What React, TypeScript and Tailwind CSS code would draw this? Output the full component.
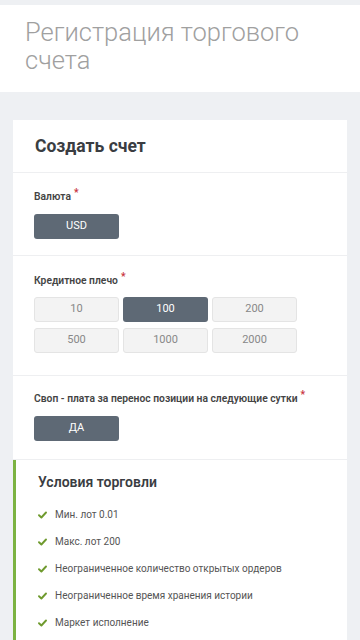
import React from "react";

const Label = ({ children }: { children: React.ReactNode }) => (
  <div className="text-[10.3px] leading-[16px] font-semibold text-[#444]">
    {children}
    <span className="text-[#c8323c] relative -top-[4px] ml-[3px]">*</span>
  </div>
);

const Btn = ({ children, active }: { children: React.ReactNode; active?: boolean }) => (
  <div
    className={
      active
        ? "w-[85px] h-[25px] rounded-[3px] bg-[#5e6975] text-white text-[11px] flex items-center justify-center"
        : "w-[85px] h-[25px] rounded-[3px] bg-[#f3f3f3] border border-[#e4e4e4] text-[#888] text-[11px] flex items-center justify-center"
    }
  >
    {children}
  </div>
);

const Check = () => (
  <svg width="9" height="8" viewBox="0 0 9 8" className="shrink-0">
    <path d="M1 4.2 L3.4 6.5 L8 1.5" fill="none" stroke="#6f9a2e" strokeWidth="1.9" strokeLinecap="round" strokeLinejoin="round" />
  </svg>
);

export default function App() {
  const items = [
    "Мин. лот 0.01",
    "Макс. лот 200",
    "Неограниченное количество открытых ордеров",
    "Неограниченное время хранения истории",
    "Маркет исполнение",
  ];
  return (
    <div className="min-h-[640px] bg-[#eef0f3] pt-[5px]" style={{ fontFamily: "Roboto, 'Noto Sans', sans-serif" }}>
      <div className="bg-white h-[87px] pl-[25px] pt-[13px]">
        <div className="text-[25.5px] leading-[28px] font-light text-[#a0a0a0]">Регистрация торгового счета</div>
      </div>
      <div className="px-[13px] pt-[28px]">
        <div className="bg-white">
          <div className="h-[53px] pl-[22px] pt-[14px] border-b border-[#eeeff1]">
            <div className="text-[17.5px] leading-[24px] font-bold text-[#3a3d42]">Создать счет</div>
          </div>
          <div className="h-[83px] pl-[21px] pt-[16px] border-b border-[#eeeff1]">
            <Label>Валюта</Label>
            <div className="mt-[9px]">
              <Btn active>USD</Btn>
            </div>
          </div>
          <div className="h-[120px] pl-[21px] pt-[17px] border-b border-[#eeeff1]">
            <Label>Кредитное плечо</Label>
            <div className="mt-[8px] grid grid-cols-[85px_85px_85px] gap-x-[4px] gap-y-[6px]">
              <Btn>10</Btn>
              <Btn active>100</Btn>
              <Btn>200</Btn>
              <Btn>500</Btn>
              <Btn>1000</Btn>
              <Btn>2000</Btn>
            </div>
          </div>
          <div className="h-[84px] pl-[21px] pt-[15px] border-b border-[#eeeff1]">
            <Label>Своп - плата за перенос позиции на следующие сутки</Label>
            <div className="mt-[9px]">
              <Btn active>ДА</Btn>
            </div>
          </div>
          <div className="border-l-[3px] border-[#7cb342] pl-[22px] pt-[12px] pb-[10px]">
            <div className="text-[14px] leading-[20px] font-semibold text-[#3a3d42]">Условия торговли</div>
            <div className="mt-[9px] flex flex-col">
              {items.map((t) => (
                <div key={t} className="h-[27px] flex items-center gap-[8px]">
                  <Check />
                  <span className="text-[10px] text-[#555]">{t}</span>
                </div>
              ))}
            </div>
          </div>
        </div>
      </div>
    </div>
  );
}
